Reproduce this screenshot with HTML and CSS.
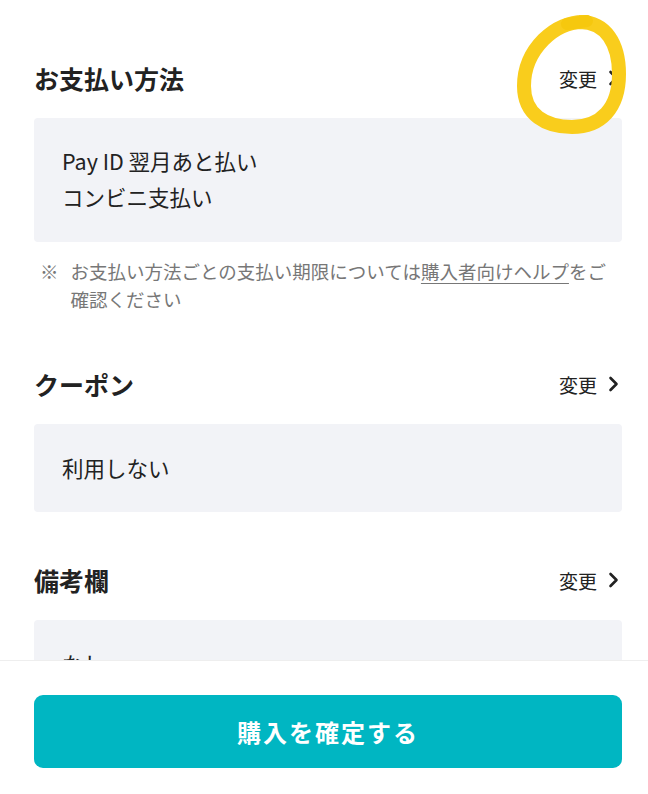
FILE: index.html
```html
<!DOCTYPE html>
<html lang="ja">
<head>
    <meta charset="UTF-8">
    <meta name="viewport" content="width=device-width, initial-scale=1.0">
    <title>購入手続き</title>
    <link rel="stylesheet" href="styles.css">
</head>
<body>
    <div class="screen">
        <div class="content">
            <div class="section">
                <div class="section-head">
                    <h2>お支払い方法</h2>
                    <a class="change" href="#">変更
                        <svg width="11" height="16" viewBox="0 0 11 16"><path d="M2.5 2 L8.5 8 L2.5 14" fill="none" stroke="#222" stroke-width="2.6" stroke-linecap="round" stroke-linejoin="round"/></svg>
                    </a>
                </div>
                <div class="box">
                    <p>Pay ID 翌月あと払い</p>
                    <p>コンビニ支払い</p>
                </div>
                <div class="note">
                    <span class="mark">※</span>
                    <span>お支払い方法ごとの支払い期限については<a href="#">購入者向けヘルプ</a>をご確認ください</span>
                </div>
            </div>

            <div class="section">
                <div class="section-head">
                    <h2>クーポン</h2>
                    <a class="change" href="#">変更
                        <svg width="11" height="16" viewBox="0 0 11 16"><path d="M2.5 2 L8.5 8 L2.5 14" fill="none" stroke="#222" stroke-width="2.6" stroke-linecap="round" stroke-linejoin="round"/></svg>
                    </a>
                </div>
                <div class="box box-single">
                    <p>利用しない</p>
                </div>
            </div>

            <div class="section">
                <div class="section-head">
                    <h2>備考欄</h2>
                    <a class="change" href="#">変更
                        <svg width="11" height="16" viewBox="0 0 11 16"><path d="M2.5 2 L8.5 8 L2.5 14" fill="none" stroke="#222" stroke-width="2.6" stroke-linecap="round" stroke-linejoin="round"/></svg>
                    </a>
                </div>
                <div class="box box-single">
                    <p>なし</p>
                </div>
            </div>
        </div>

        <div class="footer">
            <button class="confirm">購入を確定する</button>
        </div>

        <!-- hand-drawn highlight from the screenshot -->
        <svg class="marker" width="648" height="160" viewBox="0 0 648 160">
            <path d="M586 22 C555 20, 524 50, 524 86 C524 115, 546 127, 572 127 C601 127, 619 108, 619 74 C619 44, 606 22, 580 22"
                  fill="none" stroke="#f9cd1c" stroke-width="14" stroke-linecap="round" stroke-linejoin="round"/>
            <path d="M567 24 L587 21" fill="none" stroke="#f6c80e" stroke-width="12" stroke-linecap="round"/>
        </svg>
    </div>
</body>
</html>
```

FILE: styles.css
```css
* {
    box-sizing: border-box;
}
body {
    margin: 0;
    font-family: "Noto Sans CJK JP", "Noto Sans", sans-serif;
    color: #222;
    background-color: #fff;
}
.screen {
    position: relative;
    width: 648px;
    height: 794px;
    display: flex;
    flex-direction: column;
    overflow: hidden;
}
.content {
    flex: 1;
    overflow: hidden;
    padding: 58px 26px 0 34px;
}
.section {
    margin-bottom: 48px;
}
.section-head {
    display: flex;
    justify-content: space-between;
    align-items: center;
    height: 40px;
    margin-bottom: 20px;
}
.section-head h2 {
    margin: 0;
    font-size: 25px;
    font-weight: bold;
    line-height: 40px;
}
.change {
    display: flex;
    align-items: center;
    gap: 11px;
    margin-right: 3px;
    font-size: 19px;
    color: #222;
    text-decoration: none;
}
.box {
    background-color: #f2f3f7;
    border-radius: 4px;
    padding: 25px 28px 27px;
}
.box-single {
    padding: 26px 28px;
}
.box p {
    margin: 0;
    font-size: 21.5px;
    line-height: 36px;
}
.note {
    display: flex;
    gap: 12px;
    margin: 15px 0 0 6px;
    padding-bottom: 3px;
    font-size: 18.5px;
    line-height: 28px;
    color: #777;
}
.note a {
    color: #777;
    text-decoration: underline;
    text-underline-offset: 4px;
}
.note .mark {
    flex-shrink: 0;
}
.footer {
    flex-shrink: 0;
    height: 134px;
    border-top: 1px solid #eeeeee;
    background-color: #fff;
    padding: 34px 26px 0 34px;
}
.confirm {
    width: 100%;
    height: 73px;
    border: none;
    border-radius: 9px;
    background-color: #00b6c2;
    color: #fff;
    font-family: inherit;
    font-size: 24px;
    font-weight: bold;
    letter-spacing: 2px;
}
.marker {
    position: absolute;
    top: 0;
    left: 0;
    pointer-events: none;
}
```
